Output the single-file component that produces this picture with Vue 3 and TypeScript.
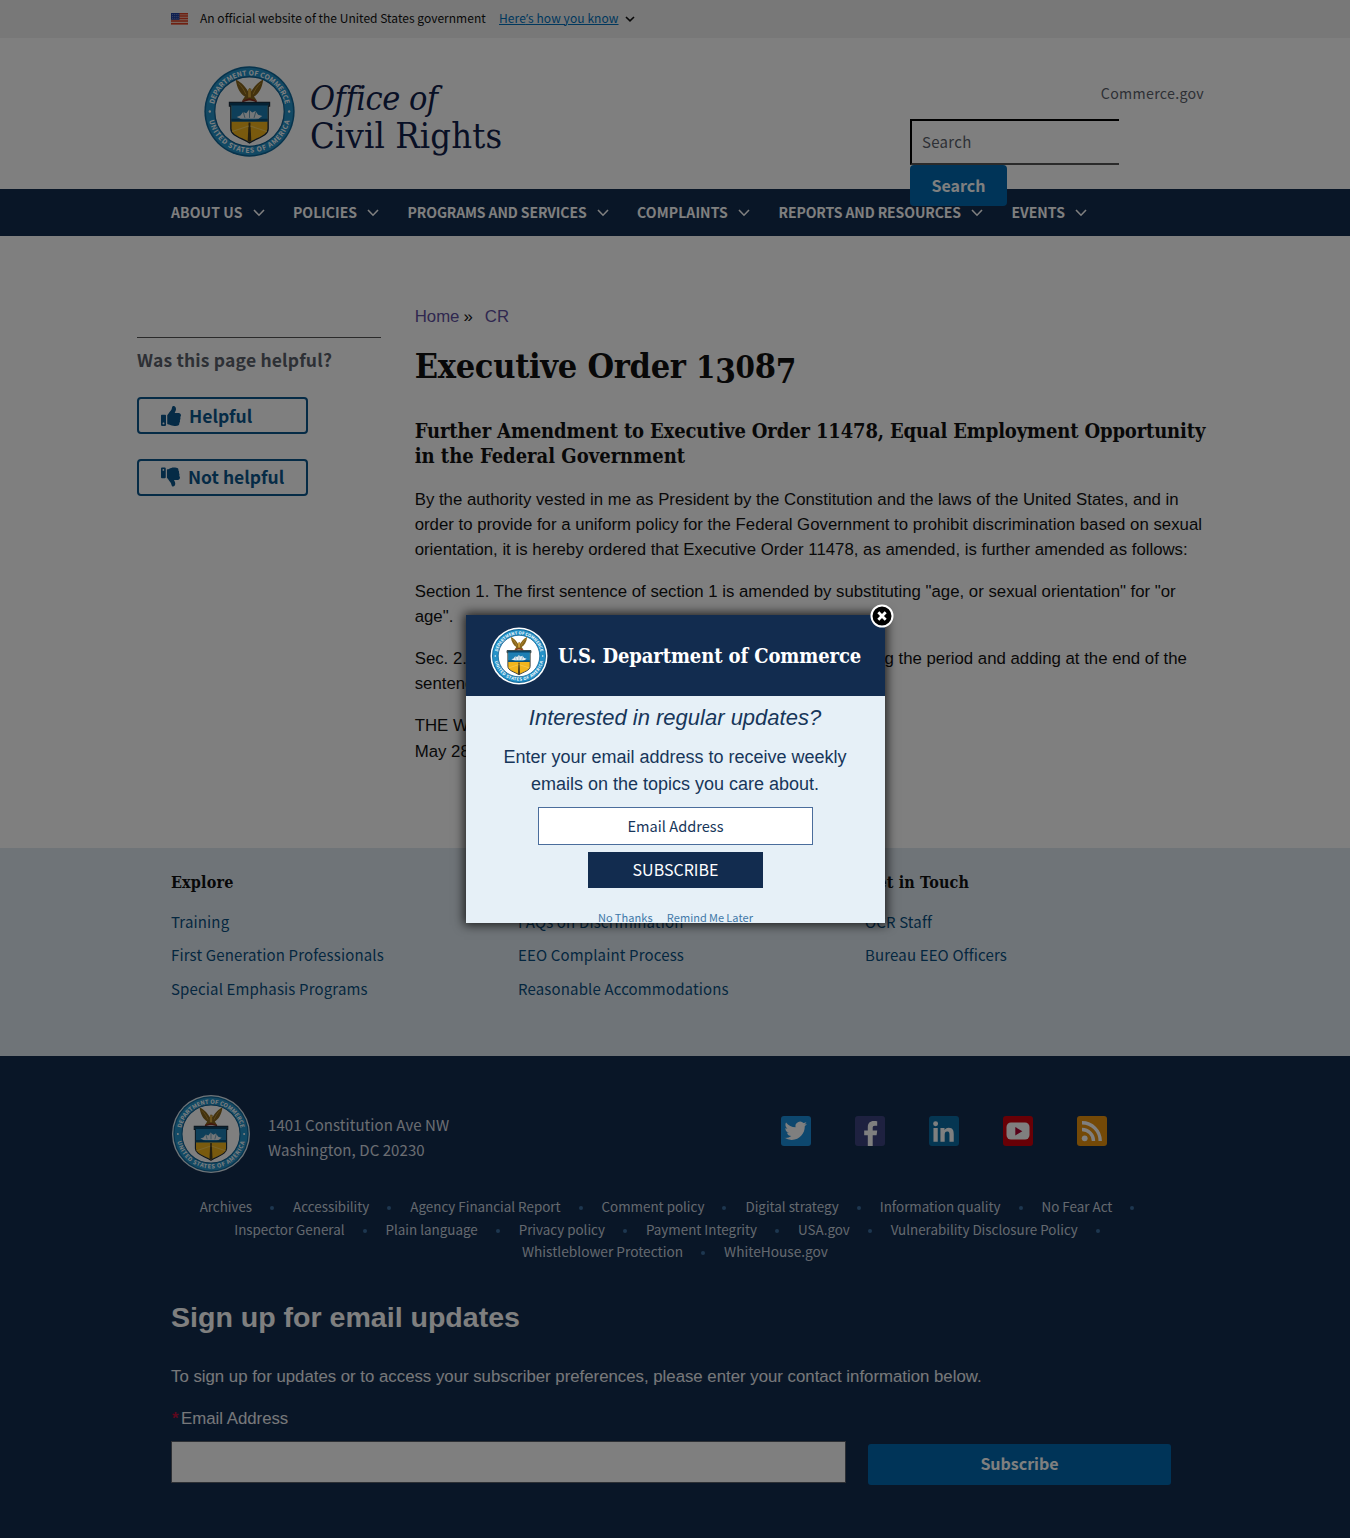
<script setup lang="ts">
interface LinkColumn {
  title: string
  links: string[]
}

const navItems: string[] = [
  'About Us',
  'Policies',
  'Programs and Services',
  'Complaints',
  'Reports and Resources',
  'Events',
]

const columns: LinkColumn[] = [
  { title: 'Explore', links: ['Training', 'First Generation Professionals', 'Special Emphasis Programs'] },
  { title: '', links: ['FAQs on Discrimination', 'EEO Complaint Process', 'Reasonable Accommodations'] },
  { title: 'Get in Touch', links: ['OCR Staff', 'Bureau EEO Officers'] },
]

const policyRows: string[][] = [
  ['Archives', 'Accessibility', 'Agency Financial Report', 'Comment policy', 'Digital strategy', 'Information quality', 'No Fear Act'],
  ['Inspector General', 'Plain language', 'Privacy policy', 'Payment Integrity', 'USA.gov', 'Vulnerability Disclosure Policy'],
  ['Whistleblower Protection', 'WhiteHouse.gov'],
]

const thumbPath =
  'M104 224H24c-13.255 0-24 10.745-24 24v240c0 13.255 10.745 24 24 24h80c13.255 0 24-10.745 24-24V248c0-13.255-10.745-24-24-24zM64 472c-13.255 0-24-10.745-24-24s10.745-24 24-24 24 10.745 24 24-10.745 24-24 24zM384 81.452c0 42.416-25.97 66.208-33.277 94.548h101.723c33.397 0 59.397 27.746 59.553 58.098.084 17.938-7.546 37.249-19.439 49.197l-.11.11c9.836 23.337 8.237 56.037-9.308 79.469 8.681 25.895-.069 57.704-16.382 74.757 4.298 17.598 2.244 32.575-6.148 44.632C440.202 511.587 389.616 512 346.839 512l-2.845-.001c-48.287-.017-87.806-17.598-119.56-31.725-15.957-7.099-36.821-15.887-52.651-16.178-6.54-.12-11.783-5.457-11.783-11.998v-213.77c0-3.2 1.282-6.271 3.558-8.521 39.614-39.144 56.648-80.587 89.117-113.111 14.804-14.832 20.188-37.236 25.393-58.902C282.515 39.293 291.817 0 312 0c24 0 72 8 72 81.452z'
</script>

<template>
  <div class="page">
    <!-- Department seal, shared by the header, the footer and the dialog -->
    <svg class="defs" width="0" height="0" aria-hidden="true">
      <defs>
        <path id="arc-top" d="M10.2 50a39.8 39.8 0 0 1 79.6 0" />
        <path id="arc-bottom" d="M4.6 50a45.4 45.4 0 0 0 90.8 0" />
        <symbol id="seal" viewBox="0 0 100 100">
          <circle cx="50" cy="50" r="49.6" fill="#0f6799" />
          <circle cx="50" cy="50" r="48" fill="#2592c8" />
          <circle cx="50" cy="50" r="38.2" fill="#fff" stroke="#0f5f90" stroke-width="1.4" />
          <text class="seal-text">
            <textPath href="#arc-top" startOffset="8" textLength="109">DEPARTMENT OF COMMERCE</textPath>
          </text>
          <text class="seal-text">
            <textPath href="#arc-bottom" startOffset="10" textLength="122">UNITED STATES OF AMERICA</textPath>
          </text>
          <circle cx="6.4" cy="50" r="1.3" fill="#fff" />
          <circle cx="93.6" cy="50" r="1.3" fill="#fff" />
          <path d="M35 15c3 1 10 6 13.500 13l1-3.500 2.500.5v3c3-6 9.500-12 13-13-1 9-5 15.500-10 18.500l3 4.500H42l3-4.500c-5-3-9-9.500-10-18.500z" fill="#86651c" />
          <path d="M38 19c3 3 6 7 8 12M62 19c-3 3-6 7-8 12" stroke="#c79a36" stroke-width="1" fill="none" />
          <path d="M48.500 25.500h3v9h-3z" fill="#d9a93c" />
          <path d="M42 39l8-2.500 8 2.500" stroke="#8c2a1c" stroke-width="1.800" fill="none" />
          <path d="M28 40h44v4h-1.500v25c0 8-12 10-20.500 15.500C41.500 79 29.500 77 29.500 69V44H28z" fill="#f2b51d" stroke="#1b2a3a" stroke-width="1.500" />
          <path d="M30 41h40v20H30z" fill="#1d7fb4" />
          <path d="M28.500 40.500h43v3h-43z" fill="#0b4468" />
          <path d="M36 56l4-1.500 3-4 3.500 1.500 3-4 3.500 3 3.500-1.500 3 4 4.500 1.500-4 3H40z" fill="#e8eef2" />
          <path d="M43 50l2 7M50 48v9M57 50l-2 7" stroke="#3a7a9c" stroke-width=".8" />
          <path d="M30 58h9l4 1h14l4-1h9v3H30z" fill="#0c4f77" />
          <path d="M49 62h2l1 20.500-2 1-2-1z" fill="#4b4020" />
          <path d="M31 72l18-6M69 72l-18-6" stroke="#f9cf5c" stroke-width="1.200" />
        </symbol>
      </defs>
    </svg>

    <div class="banner">
      <svg class="flag" viewBox="0 0 17 12">
        <path d="M0 0h17v12H0z" fill="#f3c9b8" />
        <path d="M0 .7h17M0 3.100h17M0 5.500h17M0 7.900h17M0 10.800h17" stroke="#dc3f22" stroke-width="1.500" />
        <path d="M0 0h8.500v6.800H0z" fill="#1d3fa0" />
        <path d="M1 1.500h6.500M1 3.500h6.500M1 5.300h6.500" stroke="#aab6e0" stroke-width=".7" stroke-dasharray=".8 1.100" />
      </svg>
      <span class="banner-text">An official website of the United States government</span>
      <a class="banner-link">Here<i>’</i>s how you know</a>
      <svg class="banner-chevron" viewBox="0 0 10 6"><path d="M1 1l4 3.800L9 1" /></svg>
    </div>

    <header class="header">
      <div class="brand">
        <svg class="seal-head"><use href="#seal" /></svg>
        <div class="brand-name">
          <em>Office of</em>
          <span>Civil Rights</span>
        </div>
      </div>
      <div class="tools">
        <a class="tools-link">Commerce.gov</a>
        <div class="search">
          <div class="search-input">Search</div>
          <div class="search-button">Search</div>
        </div>
      </div>
    </header>

    <nav class="nav">
      <a v-for="item in navItems" :key="item" class="nav-item">
        <span>{{ item }}</span>
        <svg viewBox="0 0 12 8"><path d="M1 1l5 5.200L11 1" /></svg>
      </a>
    </nav>

    <main class="main">
      <aside class="side">
        <h4>Was this page helpful?</h4>
        <div class="vote">
          <svg class="up" viewBox="0 0 512 512"><path :d="thumbPath" /></svg>
          <span>Helpful</span>
        </div>
        <div class="vote">
          <svg class="down" viewBox="0 0 512 512"><path :d="thumbPath" /></svg>
          <span>Not helpful</span>
        </div>
      </aside>
      <article class="article">
        <div class="crumbs"><a>Home</a><span>»</span><a>CR</a></div>
        <!-- Old-style figures: 1 and 0 sit low, 3 and 7 descend -->
        <h1>Executive Order <span class="low">1</span><span class="drop">3</span><span class="low">0</span>8<span class="drop">7</span></h1>
        <h2>
          <span class="tight">Further Amendment to Executive Order 11478, Equal Employment Opportunity</span><br />
          <span>in the Federal Government</span>
        </h2>
        <p>By the authority vested in me as President by the Constitution and the laws of the United States, and in order to provide for a uniform policy for the Federal Government to prohibit discrimination based on sexual orientation, it is hereby ordered that Executive Order 11478, as amended, is further amended as follows:</p>
        <p>Section 1. The first sentence of section 1 is amended by substituting "age, or sexual orientation" for "or age".</p>
        <p>Sec. 2. The second sentence of section 1 is amended by striking the period and adding at the end of the sentence ", to the extent permitted by law."</p>
        <p>THE WHITE HOUSE,<br />May 28, 1998.</p>
      </article>
    </main>

    <section class="links">
      <div v-for="(column, i) in columns" :key="i" class="links-col">
        <h3>{{ column.title }}</h3>
        <a v-for="link in column.links" :key="link">{{ link }}</a>
      </div>
    </section>

    <footer class="footer">
      <div class="contact">
        <svg class="seal-foot" viewBox="0 0 80 80">
          <circle cx="40" cy="40" r="39" fill="#dfe9f0" />
          <use href="#seal" x="2" y="2" width="76" height="76" />
        </svg>
        <div class="address">1401 Constitution Ave NW<br />Washington, DC 20230</div>
        <div class="social">
          <svg viewBox="0 0 30 30">
            <rect width="30" height="30" rx="3" fill="#1b8fdc" />
            <path transform="translate(3.500 3.500) scale(.94)" fill="#fff" d="M23.953 4.570a10 10 0 01-2.825.775 4.958 4.958 0 002.163-2.723c-.951.555-2.005.959-3.127 1.184a4.920 4.920 0 00-8.384 4.482C7.690 8.095 4.067 6.130 1.640 3.162a4.822 4.822 0 00-.666 2.475c0 1.710.870 3.213 2.188 4.096a4.904 4.904 0 01-2.228-.616v.060a4.923 4.923 0 003.946 4.827 4.996 4.996 0 01-2.212.085 4.936 4.936 0 004.604 3.417 9.867 9.867 0 01-6.102 2.105c-.390 0-.779-.023-1.170-.067a13.995 13.995 0 007.557 2.209c9.053 0 13.998-7.496 13.998-13.985 0-.210 0-.420-.015-.630A9.935 9.935 0 0024 4.590z" />
          </svg>
          <svg viewBox="0 0 30 30">
            <rect width="30" height="30" rx="3" fill="#3d4380" />
            <path fill="#fff" d="M12.800 30V19.200H9.200v-4.800h3.600v-3.200c0-4 2.200-6.200 6-6.200 1.600 0 2.900.1 3.400.2v4.600h-2.300c-1.800 0-2.200.7-2.200 2v2.600h4.500l-.6 4.800h-3.900V30z" />
          </svg>
          <svg viewBox="0 0 30 30">
            <rect width="30" height="30" rx="3" fill="#0a6ca4" />
            <path transform="translate(.200 1.300) scale(1.200)" fill="#fff" d="M20.447 20.452h-3.554v-5.569c0-1.328-.027-3.037-1.852-3.037-1.853 0-2.136 1.445-2.136 2.939v5.667H9.351V9h3.414v1.561h.046c.477-.9 1.637-1.850 3.370-1.850 3.601 0 4.267 2.370 4.267 5.455v6.286zM5.337 7.433a2.062 2.062 0 01-2.063-2.065 2.064 2.064 0 112.063 2.065zm1.782 13.019H3.555V9h3.564v11.452z" />
          </svg>
          <svg viewBox="0 0 30 30">
            <rect width="30" height="30" rx="3" fill="#d0000c" />
            <rect x="3.500" y="6.500" width="23" height="17" rx="4.500" fill="#fff" />
            <path d="M12.300 11l7 4.200-7 4.200z" fill="#b00030" />
          </svg>
          <svg viewBox="0 0 30 30">
            <rect width="30" height="30" rx="3" fill="#e8930f" />
            <circle cx="7.700" cy="22.300" r="2.900" fill="#fff" />
            <path d="M5 13.500A11.500 11.500 0 0 1 16.500 25M5 6.800A18.200 18.200 0 0 1 23.200 25" fill="none" stroke="#fff" stroke-width="3.400" />
          </svg>
        </div>
      </div>

      <div class="policies">
        <div v-for="(row, i) in policyRows" :key="i" class="policy-row">
          <span v-for="(item, j) in row" :key="item" class="policy" :class="{ last: i === 2 && j === row.length - 1 }">{{ item }}</span>
        </div>
      </div>

      <h2 class="signup-title">Sign up for email updates</h2>
      <p class="signup-text">To sign up for updates or to access your subscriber preferences, please enter your contact information below.</p>
      <div class="signup-label"><span>*</span>Email Address</div>
      <div class="signup-form">
        <div class="signup-input"></div>
        <div class="signup-button">Subscribe</div>
      </div>
    </footer>

    <div class="overlay"></div>

    <div class="dialog">
      <div class="dialog-head">
        <svg class="seal-dialog" viewBox="0 0 58 58">
          <circle cx="29" cy="29" r="28.500" fill="#fff" />
          <use href="#seal" x="1.800" y="1.800" width="54.400" height="54.400" />
        </svg>
        <span>U.S. Department of Commerce</span>
      </div>
      <div class="dialog-title">Interested in regular updates?</div>
      <div class="dialog-text">Enter your email address to receive weekly<br />emails on the topics you care about.</div>
      <div class="dialog-input">Email Address</div>
      <div class="dialog-button">SUBSCRIBE</div>
      <div class="dialog-links"><a>No Thanks</a><a>Remind Me Later</a></div>
      <svg class="close" viewBox="0 0 24 24">
        <circle cx="12" cy="12" r="10.500" fill="#000" stroke="#fff" stroke-width="2" />
        <path d="M8.300 8.300l7.400 7.400M15.700 8.300l-7.400 7.400" stroke="#fff" stroke-width="2.800" />
      </svg>
    </div>
  </div>
</template>

<style>
body {
  margin: 0;
}
</style>

<style scoped>
* {
  box-sizing: border-box;
}
.page {
  --sans: 'Noto Sans CJK SC', 'Open Sans', sans-serif;
  --serif: 'DejaVu Serif Condensed', 'DejaVu Serif', serif;
  --arial: 'Liberation Sans', Arial, sans-serif;
  --navy: #122c4f;
  position: relative;
  width: 1350px;
  height: 1538px;
  overflow: hidden;
  background: #fff;
  color: #111;
  font-family: var(--sans);
  white-space: nowrap;
}
.defs {
  position: absolute;
}
.seal-text {
  font: 700 7.500px var(--sans);
  fill: #fff;
}
h1, h2, h3, h4, p {
  margin: 0;
}

.banner {
  height: 38px;
  padding-left: 171px;
  display: flex;
  align-items: center;
  background: #f0f0f0;
  font-size: 12px;
  line-height: 18px;
}
.flag {
  width: 17px;
  height: 12px;
}
.banner-text {
  margin: 0 0 2px 12px;
  width: 286px;
  letter-spacing: 0.02px;
}
.banner-link {
  margin: 0 0 2px 13px;
  width: 120px;
  color: #0071bc;
  letter-spacing: 0.08px;
  text-decoration: underline;
}
.banner-link i {
  font-family: 'Open Sans', sans-serif;
  font-style: normal;
}
.banner-chevron {
  width: 10px;
  height: 6px;
  margin-left: 6px;
  fill: none;
  stroke: #111;
  stroke-width: 1.6;
}

.header {
  position: relative;
  z-index: 1;
  height: 151px;
  padding: 28px 146px 0 204px;
  display: flex;
  justify-content: space-between;
}
.brand {
  display: flex;
}
.seal-head {
  width: 91px;
  height: 91px;
}
.brand-name {
  display: flex;
  flex-direction: column;
  margin: 13px 0 0 15px;
  font-family: var(--serif);
  font-size: 36px;
  letter-spacing: 0.150px;
  line-height: 38px;
  color: #11204a;
}
.brand-name em {
  font-size: 34px;
  letter-spacing: -0.5px;
}
.tools {
  width: 294px;
}
.tools-link {
  display: block;
  margin-top: 17px;
  line-height: 20px;
  text-align: right;
  font-size: 14.200px;
  letter-spacing: 0.300px;
  color: #5b616b;
}
.search {
  margin-top: 16px;
}
.search-input {
  width: 209px;
  height: 46px;
  padding-left: 10px;
  border: 2px solid #000;
  border-right: 0;
  border-bottom-color: #555;
  font-size: 15px;
  letter-spacing: 0.300px;
  line-height: 42px;
  color: #5b616b;
}
.search-button {
  width: 97px;
  height: 41px;
  border-radius: 4px;
  background: #0069b0;
  color: #fff;
  font-size: 16px;
  font-weight: 700;
  line-height: 41px;
  text-align: center;
}

.nav {
  height: 47px;
  padding-left: 171px;
  display: flex;
  align-items: center;
  gap: 28.500px;
  background: var(--navy);
}
.nav-item {
  display: flex;
  align-items: center;
  gap: 10px;
  color: #fff;
  font-size: 14px;
  font-weight: 700;
  line-height: 20px;
  text-transform: uppercase;
}
.nav-item span {
  margin-bottom: 1px;
}
.nav-item:first-child span,
.nav-item:nth-child(4) span {
  letter-spacing: 0.100px;
}
.nav-item:nth-child(3) span,
.nav-item:nth-child(5) span {
  letter-spacing: -0.100px;
}
.nav-item svg {
  width: 12px;
  height: 8px;
  margin-top: 1px;
  fill: none;
  stroke: #fff;
  stroke-width: 1.6;
}

.main {
  height: 612px;
  padding-left: 137px;
  display: flex;
}
.side {
  width: 244px;
  height: 200px;
  margin-top: 101px;
  border-top: 1px solid #555;
}
.side h4 {
  margin: 8px 0 24px;
  font-size: 17.500px;
  letter-spacing: 0.180px;
  line-height: 27px;
  color: #5b616b;
}
.vote {
  width: 171px;
  height: 37px;
  margin-bottom: 25px;
  padding-left: 22px;
  display: flex;
  align-items: center;
  border: 2px solid #0b568c;
  border-radius: 4px;
  color: #0b568c;
  font-size: 17.500px;
  font-weight: 700;
  line-height: 32px;
}
.vote svg {
  width: 20px;
  height: 20px;
  margin: 0 8px 0 0;
  fill: #0b568c;
}
.vote .down {
  width: 19px;
  margin-bottom: 1px;
  transform: scaleY(-1);
}
.vote .down + span {
  margin-bottom: 1px;
}
.article {
  width: 800px;
  margin-left: 33.700px;
  font-family: var(--arial);
  font-size: 16.800px;
  line-height: 25.200px;
}
.crumbs {
  margin-top: 68px;
}
.crumbs a {
  color: #5f50a0;
}
.crumbs span {
  margin: 0 12px 0 4px;
}
.article h1 {
  height: 41px;
  margin-top: 17px;
  font-family: var(--serif);
  font-size: 34px;
  letter-spacing: -0.280px;
  line-height: 41px;
}
.article h1 span {
  line-height: 0;
}
.article h1 .low {
  font-size: 31px;
}
.article h1 .drop {
  font-size: 33px;
  vertical-align: -5px;
}
.article h2 {
  margin: 31.400px 0 18px;
  font-family: var(--serif);
  font-size: 20px;
  line-height: 25px;
}
.tight {
  letter-spacing: -0.145px;
}
.article p {
  margin-bottom: 16.800px;
  white-space: normal;
}

.links {
  height: 208px;
  padding: 23px 0 0 171px;
  display: flex;
  background: #dfe9f1;
}
.links-col {
  width: 347px;
  display: flex;
  flex-direction: column;
}
.links-col h3 {
  height: 24px;
  margin-bottom: 9.500px;
  font-family: var(--serif);
  font-size: 16px;
  letter-spacing: 0.150px;
  line-height: 24px;
}
.links-col a {
  font-size: 15px;
  letter-spacing: 0.150px;
  line-height: 33.500px;
  color: #0a4f80;
}

.footer {
  height: 482px;
  padding: 38px 171px 0;
  background: var(--navy);
  color: #fff;
}
.contact {
  display: flex;
}
.seal-foot {
  width: 80px;
  height: 80px;
}
.address {
  margin: 18px 0 0 17px;
  width: 513px;
  font-size: 15px;
  letter-spacing: 0.070px;
  line-height: 25px;
  color: #d6dbe2;
}
.social {
  display: flex;
  gap: 44px;
  margin-top: 22px;
}
.social svg {
  width: 30px;
  height: 30px;
}
.policies {
  margin-top: 21px;
}
.policy-row {
  display: flex;
  justify-content: center;
  gap: 3px;
  height: 22.500px;
  line-height: 22px;
  font-size: 13.400px;
  color: #c9d2de;
}
.policy-row:last-child {
  font-size: 13.700px;
}
.policy::after {
  content: '';
  display: inline-block;
  width: 4px;
  height: 4px;
  margin: 0 16px 2px 18px;
  border-radius: 2px;
  background: #3b6ea0;
}
.policy.last::after {
  display: none;
}
.signup-title {
  margin-top: 34px;
  font: 700 28.560px/40px var(--arial);
}
.signup-text {
  margin-top: 27px;
  font: 16.800px/25px var(--arial);
  color: #eef0f4;
}
.signup-label {
  margin-top: 17px;
  font: 16.800px/25px var(--arial);
  color: #eef0f4;
}
.signup-label span {
  display: inline-block;
  width: 10px;
  padding-left: 1px;
  font-weight: 700;
  color: #b8103c;
}
.signup-form {
  display: flex;
  margin-top: 10px;
}
.signup-input {
  width: 675px;
  height: 42px;
  border: 1px solid #5b616b;
  background: #fff;
}
.signup-button {
  width: 303px;
  height: 41px;
  margin: 3px 0 0 22px;
  border-radius: 3px;
  background: #0069b0;
  font-size: 16px;
  font-weight: 700;
  line-height: 39px;
  text-align: center;
}

.overlay {
  position: absolute;
  z-index: 2;
  inset: 0;
  background: rgba(0, 0, 0, 0.5);
}
.dialog {
  position: absolute;
  z-index: 3;
  left: 466px;
  top: 615px;
  width: 419px;
  height: 308px;
  display: flex;
  flex-direction: column;
  align-items: center;
  background: #e6f0f7;
  box-shadow: 0 0 10px 2px rgba(0, 0, 0, 0.75);
  color: #17365a;
}
.dialog > * {
  flex-shrink: 0;
}
.dialog-head {
  width: 100%;
  height: 81px;
  padding-left: 24px;
  display: flex;
  align-items: center;
  background: var(--navy);
  color: #fff;
  font: 700 20px/30px var(--serif);
  letter-spacing: -0.100px;
}
.seal-dialog {
  width: 58px;
  height: 58px;
  margin-right: 10px;
}
.dialog-title {
  margin: 7px 1px 0 0;
  font: italic 22px/30px var(--arial);
}
.dialog-text {
  margin: 11px 1px 0 0;
  font: 18px/27px var(--arial);
  text-align: center;
}
.dialog-input {
  width: 275px;
  height: 38px;
  margin-top: 9px;
  border: 1px solid #4a6d9c;
  background: #fff;
  font-size: 14.600px;
  line-height: 36px;
  text-align: center;
}
.dialog-button {
  width: 175px;
  height: 36px;
  margin-top: 7px;
  background: var(--navy);
  color: #fff;
  font-size: 16px;
  line-height: 35px;
  text-align: center;
}
.dialog-links {
  display: flex;
  gap: 14px;
  margin-top: 21px;
  font-size: 11px;
  letter-spacing: 0.100px;
  word-spacing: -0.600px;
  line-height: 16px;
  color: #3f78a8;
}
.close {
  position: absolute;
  left: 404px;
  top: -11px;
  width: 24px;
  height: 24px;
}
</style>
